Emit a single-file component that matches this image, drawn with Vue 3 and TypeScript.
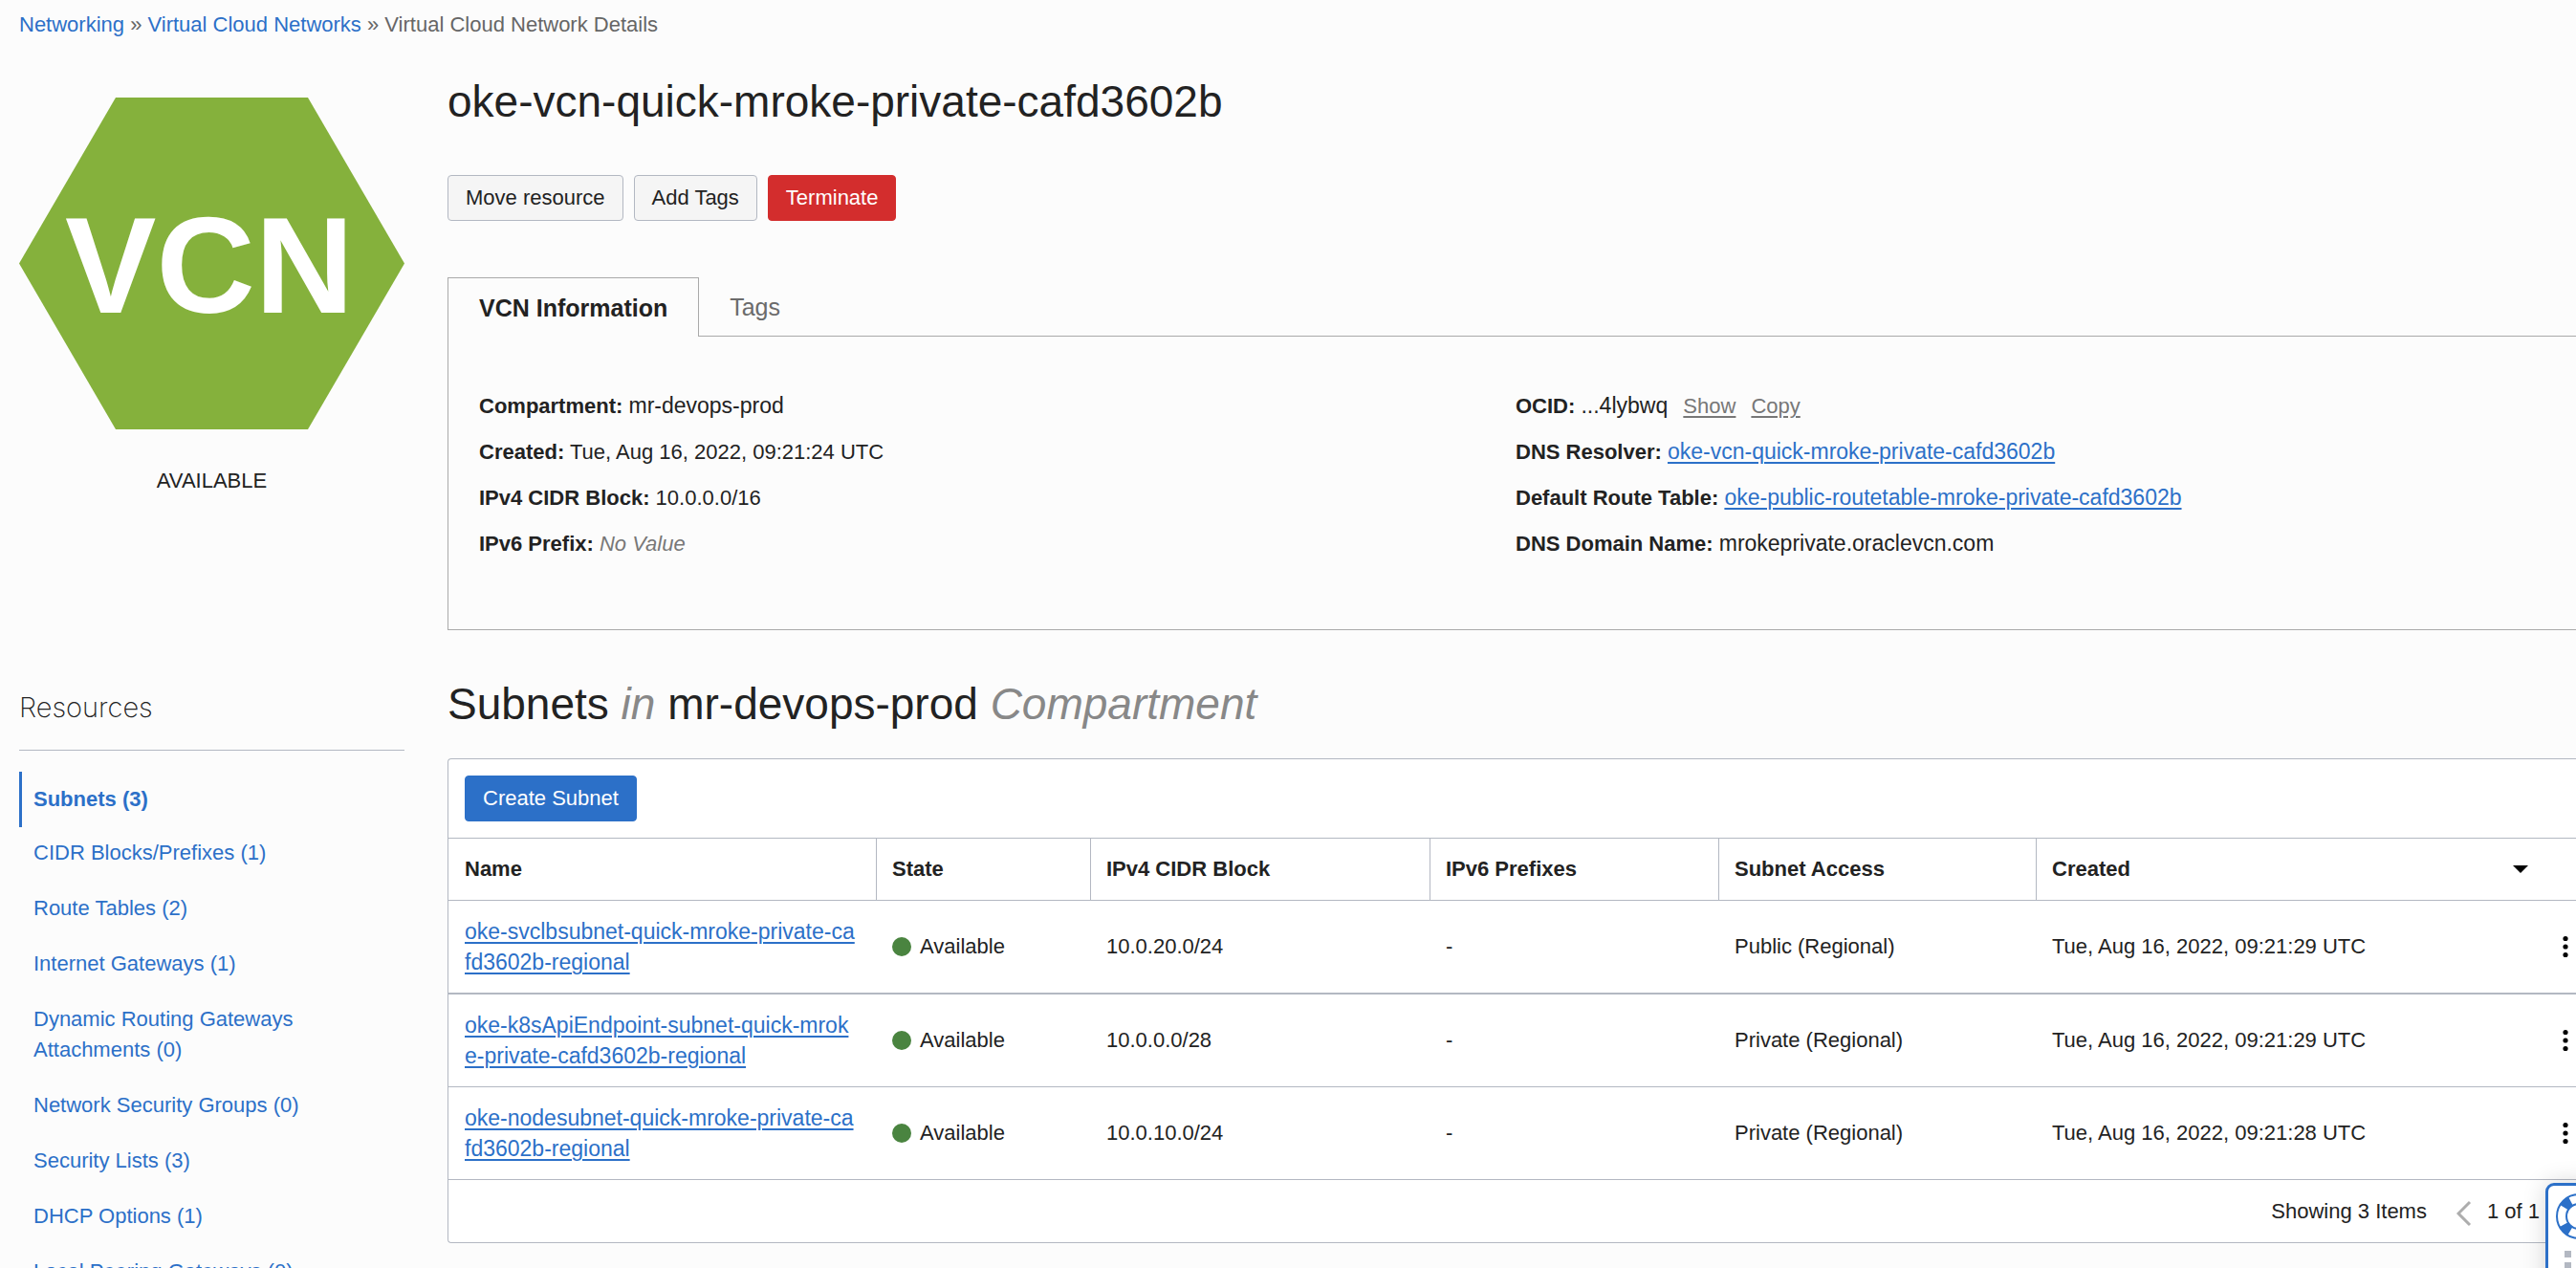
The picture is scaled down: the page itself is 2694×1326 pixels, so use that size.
<script setup lang="ts">
interface ResourceLink {
  label: string
  count: number
  active?: boolean
}

interface Subnet {
  name: string
  state: string
  cidr: string
  access: string
  created: string
}

const resources: ResourceLink[] = [
  { label: 'Subnets', count: 3, active: true },
  { label: 'CIDR Blocks/Prefixes', count: 1 },
  { label: 'Route Tables', count: 2 },
  { label: 'Internet Gateways', count: 1 },
  { label: 'Dynamic Routing Gateways Attachments', count: 0 },
  { label: 'Network Security Groups', count: 0 },
  { label: 'Security Lists', count: 3 },
  { label: 'DHCP Options', count: 1 },
  { label: 'Local Peering Gateways', count: 0 },
]

const subnets: Subnet[] = [
  {
    name: 'oke-svclbsubnet-quick-mroke-private-cafd3602b-regional',
    state: 'Available',
    cidr: '10.0.20.0/24',
    access: 'Public (Regional)',
    created: 'Tue, Aug 16, 2022, 09:21:29 UTC',
  },
  {
    name: 'oke-k8sApiEndpoint-subnet-quick-mroke-private-cafd3602b-regional',
    state: 'Available',
    cidr: '10.0.0.0/28',
    access: 'Private (Regional)',
    created: 'Tue, Aug 16, 2022, 09:21:29 UTC',
  },
  {
    name: 'oke-nodesubnet-quick-mroke-private-cafd3602b-regional',
    state: 'Available',
    cidr: '10.0.10.0/24',
    access: 'Private (Regional)',
    created: 'Tue, Aug 16, 2022, 09:21:28 UTC',
  },
]
</script>

<template>
  <div class="page">
    <nav class="breadcrumb" aria-label="Breadcrumb">
      <a href="#">Networking</a> » <a href="#">Virtual Cloud Networks</a> » <span>Virtual Cloud Network Details</span>
    </nav>

    <div class="split">
      <aside class="status">
        <svg class="hexagon" viewBox="0 0 403 347" role="img" aria-label="VCN">
          <polygon points="0,173.500 101,0 302,0 403,173.500 302,347 101,347" fill="#85b13c" />
          <text x="199" y="225" text-anchor="middle">VCN</text>
        </svg>
        <p class="lifecycle">AVAILABLE</p>
      </aside>

      <main class="details">
        <h1>oke-vcn-quick-mroke-private-cafd3602b</h1>
        <div class="actions">
          <button type="button" class="btn">Move resource</button>
          <button type="button" class="btn">Add Tags</button>
          <button type="button" class="btn danger">Terminate</button>
        </div>

        <div class="tabs" role="tablist">
          <button type="button" class="tab selected" role="tab" aria-selected="true">VCN Information</button>
          <button type="button" class="tab" role="tab" aria-selected="false">Tags</button>
        </div>
        <div class="panel" role="tabpanel">
          <ul class="facts">
            <li><b>Compartment:</b> <span class="ident">mr-devops-prod</span></li>
            <li><b>Created:</b> Tue, Aug 16, 2022, 09:21:24 UTC</li>
            <li><b>IPv4 CIDR Block:</b> 10.0.0.0/16</li>
            <li><b>IPv6 Prefix:</b> <i>No Value</i></li>
          </ul>
          <ul class="facts">
            <li><b>OCID:</b> <span class="ident">...4lybwq</span> <a class="quiet" href="#">Show</a><a class="quiet" href="#">Copy</a></li>
            <li><b>DNS Resolver:</b> <a class="link ident" href="#">oke-vcn-quick-mroke-private-cafd3602b</a></li>
            <li><b>Default Route Table:</b> <a class="link ident" href="#">oke-public-routetable-mroke-private-cafd3602b</a></li>
            <li><b>DNS Domain Name:</b> <span class="ident">mrokeprivate.oraclevcn.com</span></li>
          </ul>
        </div>
      </main>
    </div>

    <div class="split lower">
      <aside class="resources">
        <h3>Resources</h3>
        <ul>
          <li v-for="item in resources" :key="item.label" :class="{ active: item.active }">
            <a href="#">{{ item.label }} ({{ item.count }})</a>
          </li>
        </ul>
      </aside>

      <section class="subnets">
        <h2>Subnets <em>in</em> mr-devops-prod <em>Compartment</em></h2>
        <div class="card">
          <div class="toolbar">
            <button type="button" class="btn primary">Create Subnet</button>
          </div>
          <table>
            <colgroup>
              <col class="c-name" />
              <col class="c-state" />
              <col class="c-cidr" />
              <col class="c-prefix" />
              <col class="c-access" />
              <col />
              <col class="c-menu" />
            </colgroup>
            <thead>
              <tr>
                <th scope="col">Name</th>
                <th scope="col">State</th>
                <th scope="col">IPv4 CIDR Block</th>
                <th scope="col">IPv6 Prefixes</th>
                <th scope="col">Subnet Access</th>
                <th scope="col" aria-sort="descending">
                  <button type="button" class="sort">
                    Created
                    <svg width="16" height="8" viewBox="0 0 16 8" aria-hidden="true"><path d="M0 0h16L8 8z" /></svg>
                  </button>
                </th>
                <th scope="col" aria-label="Actions"></th>
              </tr>
            </thead>
            <tbody>
              <tr v-for="subnet in subnets" :key="subnet.name">
                <td class="name"><a class="link" href="#">{{ subnet.name }}</a></td>
                <td><span class="state"><span class="dot"></span>{{ subnet.state }}</span></td>
                <td>{{ subnet.cidr }}</td>
                <td>-</td>
                <td>{{ subnet.access }}</td>
                <td>{{ subnet.created }}</td>
                <td class="menu">
                  <button type="button" aria-label="Row actions">
                    <svg width="22" height="24" viewBox="0 0 22 24" aria-hidden="true">
                      <circle cx="11" cy="3.500" r="2.600" />
                      <circle cx="11" cy="12" r="2.600" />
                      <circle cx="11" cy="20.500" r="2.600" />
                    </svg>
                  </button>
                </td>
              </tr>
            </tbody>
          </table>
          <div class="pager">
            <span>Showing 3 Items</span>
            <button type="button" aria-label="Previous page">
              <svg width="16" height="28" viewBox="0 0 16 28" aria-hidden="true">
                <path d="M14 2L2 14l12 12" fill="none" stroke="#adadad" stroke-width="3" />
              </svg>
            </button>
            <span>1 of 1</span>
          </div>
        </div>
      </section>
    </div>

    <button type="button" class="help" aria-label="Help">
      <svg width="48" height="48" viewBox="0 0 48 48" aria-hidden="true">
        <circle cx="24" cy="24" r="18" fill="none" stroke="#2c70c8" stroke-width="11" stroke-dasharray="9.400 18.874" stroke-dashoffset="-9.437" />
        <circle cx="24" cy="24" r="23" fill="none" stroke="#2c70c8" stroke-width="2" />
        <circle cx="24" cy="24" r="13" fill="none" stroke="#2c70c8" stroke-width="2" />
      </svg>
      <span class="grip"><i v-for="n in 6" :key="n"></i></span>
    </button>
  </div>
</template>

<style>
body {
  margin: 0;
  background: #fcfcfc;
}
</style>

<style scoped>
.page {
  height: 100vh;
  overflow: hidden;
  box-sizing: border-box;
  padding: 10px 0 0 20px;
  font: 22px/32px "Liberation Sans", Arial, sans-serif;
  color: #222;
}
h1, h2, h3, p, ul {
  margin: 0;
  padding: 0;
  font-weight: 400;
  list-style: none;
}
button {
  font: inherit;
  color: inherit;
  cursor: pointer;
}
a {
  color: #2c70c8;
  text-decoration: none;
}
.breadcrumb {
  color: #666;
  margin-bottom: 36px;
}
.split {
  display: grid;
  grid-template-columns: 403px minmax(0, 1fr);
  column-gap: 45px;
}
.status {
  padding-top: 24px;
}
.hexagon {
  display: block;
  width: 100%;
}
.hexagon text {
  font-size: 143px;
  font-weight: 700;
  fill: #fff;
}
.lifecycle {
  margin-top: 38px;
  text-align: center;
}
h1, h2 {
  font-size: 46px;
  line-height: 56px;
}
.actions {
  display: flex;
  gap: 11px;
  margin: 49px 0 59px;
}
.btn {
  height: 48px;
  padding: 0 18px;
  border: 1px solid #b3b8c2;
  border-radius: 4px;
  background: #f5f5f5;
}
.danger {
  background: #d32d2d;
  border-color: #d32d2d;
  color: #fff;
}
.primary {
  background: #2c70c8;
  border-color: #2c70c8;
  color: #fff;
}
.tabs {
  display: flex;
  position: relative;
  margin-bottom: -1px;
}
.tab {
  height: 62px;
  padding: 0 32px;
  border: 0;
  background: none;
  font-size: 25px;
  color: #6b6b6b;
}
.tab.selected {
  border: 1px solid #aaa;
  border-bottom: 0;
  background: #fcfcfc;
  font-weight: 700;
  color: #222;
}
.panel {
  display: grid;
  grid-template-columns: 1fr 1fr;
  padding: 57px 25px 73px 32px;
  border: 1px solid #aaa;
  border-right: 0;
}
.facts {
  display: grid;
  align-content: start;
  gap: 16px;
}
.facts i {
  color: #777;
}
.ident {
  font-size: 23px;
  line-height: 24px;
}
.link {
  text-decoration: underline;
  text-decoration-thickness: 2px;
  text-underline-offset: 3px;
}
.quiet {
  margin-left: 10px;
  color: #777;
  text-decoration: underline;
  text-decoration-thickness: 2px;
  text-underline-offset: 3px;
}
.quiet + .quiet {
  margin-left: 16px;
}
.lower {
  margin-top: 49px;
}
.resources {
  padding-top: 12px;
}
h3 {
  padding-bottom: 24px;
  border-bottom: 1px solid #b3b8c2;
  margin-bottom: 22px;
  font: 200 29px/40px Inter, "Liberation Sans", sans-serif;
}
.resources li {
  padding: 13px 80px 13px 12px;
  border-left: 3px solid transparent;
}
.resources li.active {
  margin-bottom: -2px;
  border-color: #2c70c8;
  font-weight: 700;
}
h2 em {
  color: #888;
}
.card {
  margin-top: 29px;
  border: 1px solid #b3b8c2;
  border-right: 0;
  border-radius: 4px 0 0 4px;
  background: #fff;
}
.toolbar {
  padding: 17px;
  border-bottom: 1px solid #b3b8c2;
}
.toolbar .btn {
  display: block;
}
table {
  width: 100%;
  table-layout: fixed;
  border-collapse: separate;
  border-spacing: 0;
}
.c-name { width: 448px; }
.c-state { width: 224px; }
.c-cidr { width: 355px; }
.c-prefix { width: 302px; }
.c-access { width: 332px; }
.c-menu { width: 22px; }
th {
  padding: 16px;
  text-align: left;
  border-bottom: 1px solid #b3b8c2;
}
th:nth-child(-n + 5) {
  border-right: 1px solid #b3b8c2;
}
th:first-child, td:first-child {
  padding-left: 17px;
}
th:nth-child(6) {
  padding-right: 28px;
}
.sort {
  display: flex;
  align-items: center;
  justify-content: space-between;
  width: 100%;
  padding: 0;
  border: 0;
  background: none;
  font-weight: 700;
}
td {
  padding: 16px;
  border-bottom: 1px solid #b3b8c2;
}
tbody tr:first-child td {
  border-bottom-width: 2px;
}
td.name {
  padding-right: 20px;
  font-size: 23px;
  word-break: break-all;
}
.state {
  display: flex;
  align-items: center;
  gap: 9px;
}
.dot {
  width: 20px;
  height: 20px;
  border-radius: 50%;
  background: #4a8440;
}
th:last-child, td.menu {
  padding: 0;
}
.menu button, .pager button {
  display: block;
  padding: 0;
  border: 0;
  background: none;
}
.menu svg, .pager svg {
  display: block;
}
.pager {
  display: flex;
  align-items: center;
  justify-content: flex-end;
  height: 65px;
  padding-right: 38px;
}
.pager button {
  margin: 4px 16px 0 31px;
}
.help {
  position: fixed;
  right: -38px;
  bottom: -31px;
  display: grid;
  justify-items: center;
  align-content: start;
  gap: 12px;
  width: 70px;
  height: 120px;
  padding: 8px 0 0;
  border: 3px solid #2c70c8;
  border-radius: 9px;
  background: #fff;
  box-shadow: 0 0 24px rgba(0, 0, 0, 0.16);
}
.grip {
  display: grid;
  grid-template-columns: repeat(3, 7px);
  gap: 5px;
}
.grip i {
  height: 7px;
  background: #b3b8c2;
}
</style>
